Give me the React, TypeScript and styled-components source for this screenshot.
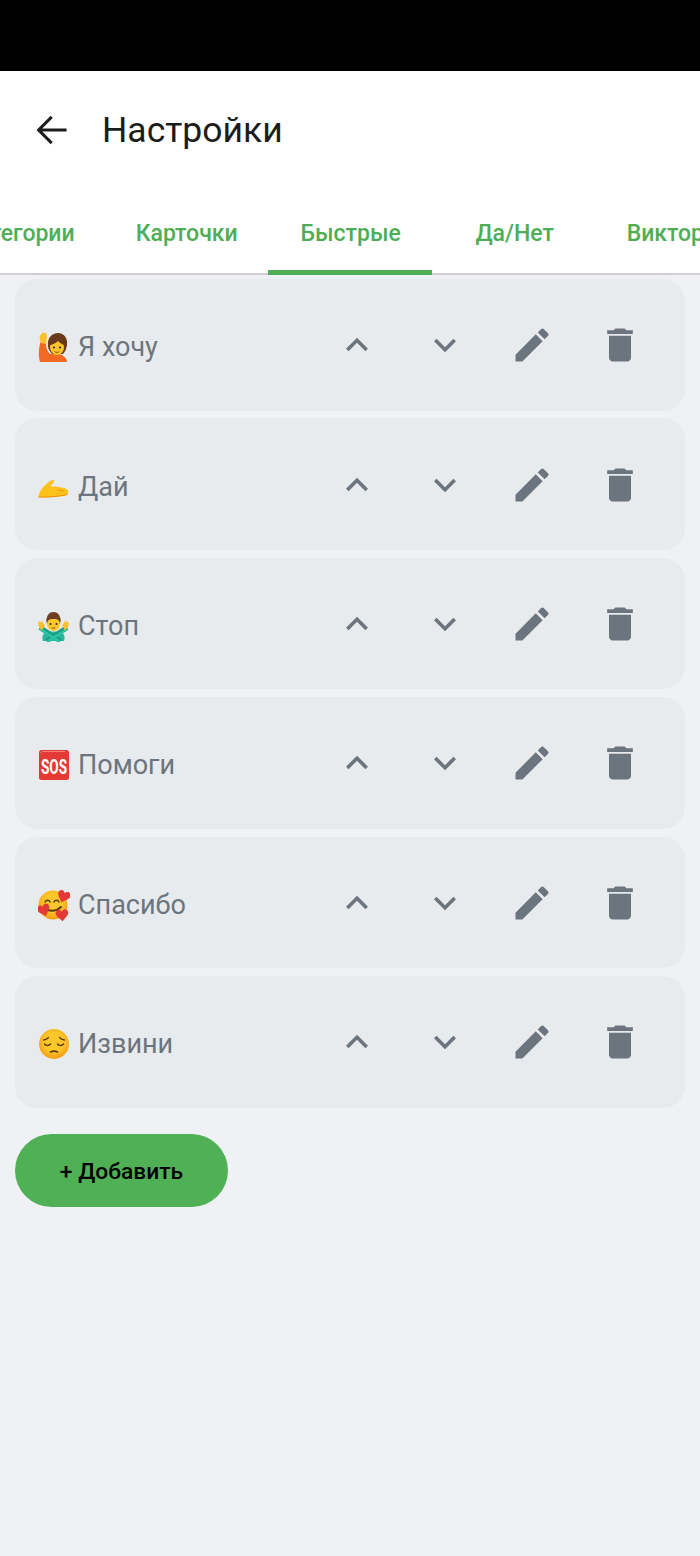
import React from 'react';
import styled, { createGlobalStyle } from 'styled-components';

const GlobalStyle = createGlobalStyle`
  html, body {
    margin: 0;
    padding: 0;
    background: #eff1f5;
    font-family: Roboto, 'Noto Sans', sans-serif;
  }
`;

const TABS = ['Категории', 'Карточки', 'Быстрые', 'Да/Нет', 'Викторина'];

type EmojiKind = 'hand' | 'give' | 'stop' | 'sos' | 'love' | 'sorry';

const ITEMS: { emoji: EmojiKind; label: string }[] = [
  { emoji: 'hand', label: 'Я хочу' },
  { emoji: 'give', label: 'Дай' },
  { emoji: 'stop', label: 'Стоп' },
  { emoji: 'sos', label: 'Помоги' },
  { emoji: 'love', label: 'Спасибо' },
  { emoji: 'sorry', label: 'Извини' },
];

const ICON_PATHS = {
  back: 'M19.6 11.2H6.9l5.5-5.500L11.300 4.600 3.900 12l7.400 7.400 1.100-1.100-5.500-5.500h12.700z',
  up: 'M12 8l-6 6 1.41 1.41L12 10.83l4.59 4.58L18 14z',
  down: 'M16.59 8.59 12 13.17 7.41 8.59 6 10l6 6 6-6z',
  edit: 'M3 17.25V21h3.75L17.81 9.94l-3.75-3.75L3 17.25zM20.71 7.04c.39-.39.39-1.02 0-1.41l-2.34-2.34c-.39-.39-1.02-.39-1.41 0l-1.83 1.83 3.75 3.75 1.83-1.83z',
  trash: 'M6 19c0 1.1.9 2 2 2h8c1.1 0 2-.9 2-2V7H6v12zM19 4h-3.5l-1-1h-5l-1 1H5v2h14V4z',
};

const HEART = 'M0 -2C-1 -5.500 -6 -5 -6 -1-6 2-2.500 4 0 7 2.500 4 6 2 6 -1 6 -5 1 -5.500 0 -2z';

const Icon = ({ name }: { name: keyof typeof ICON_PATHS }) => (
  <svg viewBox="0 0 24 24" width="100%" height="100%" fill="currentColor">
    <path d={ICON_PATHS[name]} />
  </svg>
);

const FaceGradient = ({ id }: { id: string }) => (
  <defs>
    <radialGradient id={id} cx="50%" cy="42%" r="58%">
      <stop offset="0.55" stopColor="#fcc72b" />
      <stop offset="1" stopColor="#f59c12" />
    </radialGradient>
  </defs>
);

const Emoji = ({ kind }: { kind: EmojiKind }) => {
  switch (kind) {
    case 'hand':
      return (
        <svg viewBox="0 0 32 32" width="32" height="32">
          <path d="M2 31C0 24 1 16 2.500 11l5.500 1c0 5 1 8 4 11l9 0c4 1 8 4 8 8z" fill="#f26a21" />
          <path d="M2.500 12 1.500 5 3 3.500 4.500 1.500 6.500 1.500 8.500 2.500 9 5 8 13z" fill="#fbc02d" />
          <path d="M10 15c-1-8 4-13 10-13 6 0 10 5 9 12-.5 4-2 7-4 9l-11 0c-2-2-4-5-4-8z" fill="#6b3a1a" />
          <ellipse cx="19" cy="16.500" rx="7" ry="7.500" fill="#fcc72b" />
          <path d="M12 14c3-.5 6-2 8-4 2 2 4 3.500 6 4l1-4-6-4-6 1-3 3z" fill="#6b3a1a" />
          <circle cx="16" cy="16.500" r="1.100" fill="#3b2314" />
          <circle cx="22" cy="16.500" r="1.100" fill="#3b2314" />
          <path d="M16.500 20.500c1.700 1.200 3.300 1.200 5 0" stroke="#a04a10" strokeWidth="1" fill="none" />
        </svg>
      );
    case 'give':
      return (
        <svg viewBox="0 0 32 32" width="32" height="32">
          <path d="M.5 25.500C1.500 20 5 15.500 9 12.500c2-2 5-4 6.500-3.500 1.500 1-.5 4-3 6 .5 1 3.500.5 5.500.5l8 1.500c2 .5 4.500 2 4.500 4l-1 1 .5 1c-1 1-3 1.800-5 2-8 1-17 1.500-24.500 1.500z" fill="#fcc21b" />
          <path d="M.5 25.500c7.500 0 17-.5 24.500-1.500 1.800-.2 3.500-.6 4.700-1.500l.3 .5c-1 1-3 1.800-5 2-8 1-17 1.500-24.500 1.500z" fill="#ee8f0d" />
          <path d="M19 18.500l7 1.500" stroke="#ee8f0d" strokeWidth=".9" fill="none" />
        </svg>
      );
    case 'stop':
      return (
        <svg viewBox="1.500 0 32 32" width="32" height="32">
          <path d="M6.500 31c-1.500-4 0-8 4-9.500h13c4 1.500 5.500 5.500 4 9.500z" fill="#25b89c" />
          <path d="M3.500 17.500 24 31M30.500 17.500 10 31" stroke="#1d9f86" strokeWidth="5" fill="none" />
          <path d="M4 19.500 23 31.500M30 19.500 11 31.500" stroke="#2cc4a6" strokeWidth="2.500" fill="none" />
          <path d="M1.500 13.500 3 11l1.500 1.500L5.500 10l1 3 2 2-3 5.500c-2-1.500-3.500-4-4-7z" fill="#fbc02d" />
          <path d="M32.500 13.500 31 11l-1.500 1.500-1-2.500-1 3-2 2 3 5.500c2-1.500 3.500-4 4-7z" fill="#fbc02d" />
          <path d="M10 11C10 5 13 2 17 2s7 3 7 9l-.5 3h-13z" fill="#6b4020" />
          <ellipse cx="17" cy="14" rx="6.500" ry="7" fill="#fcc72b" />
          <path d="M10.500 12c1.500-2.500 3.500-3 6.500-3s5 .5 6.500 3l.5-3-3-4h-8l-3 4z" fill="#6b4020" />
          <circle cx="14" cy="14" r="1" fill="#3b2314" />
          <circle cx="20" cy="14" r="1" fill="#3b2314" />
          <path d="M15 18h4" stroke="#a04a10" strokeWidth=".9" />
        </svg>
      );
    case 'sos':
      return (
        <svg viewBox="0 0 32 32" width="32" height="32">
          <rect x="1" y="1" width="30" height="30" rx="2.500" fill="#e53935" />
          <path d="M3 4.500C3 3 4 2.500 5 2.500h22" stroke="#f4807c" strokeWidth="1" fill="none" />
          <text
            transform="translate(16 25) scale(.68 1)"
            textAnchor="middle"
            fontFamily="Roboto, sans-serif"
            fontWeight="700"
            fontSize="20"
            fill="#fff"
          >
            SOS
          </text>
        </svg>
      );
    case 'love':
      return (
        <svg viewBox="0 0 32 32" width="32" height="32">
          <FaceGradient id="love-face" />
          <circle cx="15" cy="16" r="14.500" fill="url(#love-face)" />
          <path d="M7 13c1-2.500 4-2.500 5 0M16 13c1-2.500 4-2.500 5 0" stroke="#5d3a10" strokeWidth="1.500" fill="none" strokeLinecap="round" />
          <path d="M7.500 19.500c4 3.500 11 3 15.500-1.500" stroke="#5d3a10" strokeWidth="2" fill="none" strokeLinecap="round" />
          <path d={HEART} transform="translate(26 6.500) rotate(20) scale(1.050)" fill="#e53935" />
          <path d={HEART} transform="translate(5.500 20) rotate(-20) scale(1.050)" fill="#e53935" />
          <path d={HEART} transform="translate(24 25) rotate(-5) scale(1.050)" fill="#e53935" />
        </svg>
      );
    case 'sorry':
      return (
        <svg viewBox="0 0 32 32" width="32" height="32">
          <FaceGradient id="sorry-face" />
          <circle cx="16" cy="16" r="15" fill="url(#sorry-face)" />
          <path d="M5.500 12c2 0 3.500-1 5-2.500M26.500 12c-2 0-3.500-1-5-2.500" stroke="#5d3a10" strokeWidth="1.300" fill="none" strokeLinecap="round" />
          <path d="M6.500 16c1.500 2 4.500 2 6 0M19.500 16c1.500 2 4.500 2 6 0" stroke="#5d3a10" strokeWidth="1.500" fill="none" strokeLinecap="round" />
          <path d="M12.500 24c2-1 5-1 7 0" stroke="#5d3a10" strokeWidth="1.600" fill="none" strokeLinecap="round" />
        </svg>
      );
  }
};

const App = () => (
  <>
    <GlobalStyle />
    <Page>
      <StatusBar />
      <Header>
        <TitleRow>
          <BackButton>
            <Icon name="back" />
          </BackButton>
          <Title>Настройки</Title>
        </TitleRow>
        <TabBar>
          <TabStrip>
            {TABS.map((tab) => (
              <Tab key={tab} $active={tab === 'Быстрые'}>
                {tab}
              </Tab>
            ))}
          </TabStrip>
        </TabBar>
      </Header>
      <Content>
        {ITEMS.map((item) => (
          <Card key={item.label}>
            <Label>
              <EmojiBox>
                <Emoji kind={item.emoji} />
              </EmojiBox>
              {item.label}
            </Label>
            <Actions>
              <ActionButton>
                <Icon name="up" />
              </ActionButton>
              <ActionButton>
                <Icon name="down" />
              </ActionButton>
              <ActionButton>
                <Icon name="edit" />
              </ActionButton>
              <ActionButton>
                <Icon name="trash" />
              </ActionButton>
            </Actions>
          </Card>
        ))}
        <AddButton>+ Добавить</AddButton>
      </Content>
    </Page>
  </>
);

export default App;

const Page = styled.div`
  width: 700px;
  height: 1556px;
  overflow: hidden;
  background: #eff1f5;
`;

const StatusBar = styled.div`
  height: 71px;
  background: #000;
`;

const Header = styled.div`
  background: #fff;
`;

const TitleRow = styled.div`
  height: 119px;
  display: flex;
  align-items: center;
  padding: 0 0 2px 29px;
  box-sizing: border-box;
`;

const BackButton = styled.div`
  width: 46px;
  height: 46px;
  color: #1c1c1c;
  margin-right: 27px;
`;

const Title = styled.div`
  font-size: 35.5px;
  color: #1c1c1c;
`;

const TabBar = styled.div`
  height: 85px;
  box-shadow: inset 0 -2px 0 #cfccd6;
  overflow: hidden;
`;

const TabStrip = styled.div`
  display: flex;
  height: 85px;
  margin-left: -68px;
`;

const Tab = styled.div<{ $active: boolean }>`
  flex: none;
  min-width: 164px;
  height: 85px;
  box-sizing: border-box;
  padding: 6px 29px 0 31px;
  display: flex;
  align-items: center;
  justify-content: center;
  white-space: nowrap;
  font-size: 23px;
  font-weight: 500;
  color: #4fae55;
  border-bottom: 5px solid ${(props) => (props.$active ? '#4fae55' : 'transparent')};
`;

const Content = styled.div`
  padding: 4px 15px 0;
  display: flex;
  flex-direction: column;
  align-items: stretch;
  gap: 7.8px;
`;

const Card = styled.div`
  height: 131.6px;
  border-radius: 22px;
  background: #e8ebee;
  display: flex;
  align-items: center;
  justify-content: space-between;
  padding: 0 21.5px 0 23px;
`;

const Label = styled.div`
  display: flex;
  align-items: center;
  padding-top: 5px;
  font-size: 27px;
  color: #6c757d;
`;

const EmojiBox = styled.span`
  width: 32px;
  height: 32px;
  margin-right: 8px;
`;

const Actions = styled.div`
  display: flex;
  align-items: center;
  padding-top: 1px;
`;

const ActionButton = styled.div`
  width: 87.5px;
  height: 44px;
  padding: 0 21.75px;
  box-sizing: border-box;
  color: #6c757d;
`;

const AddButton = styled.div`
  align-self: flex-start;
  box-sizing: border-box;
  width: 213px;
  height: 73px;
  margin-top: 18.4px;
  padding-top: 3px;
  border-radius: 37px;
  background: #4fb055;
  color: #000;
  font-size: 22.8px;
  font-weight: 500;
  display: flex;
  align-items: center;
  justify-content: center;
`;
